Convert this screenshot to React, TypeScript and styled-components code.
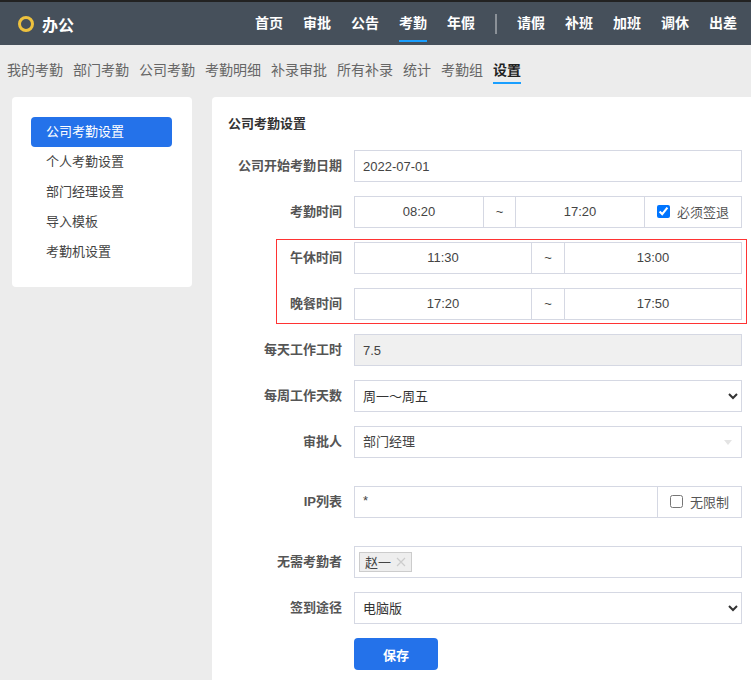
import styled, { createGlobalStyle } from 'styled-components'

const GlobalStyle = createGlobalStyle`
    html, body {
        margin: 0;
        height: 680px;
        overflow: hidden;
        background-color: #ececec;
        font-family: 'Liberation Sans', 'Noto Sans CJK SC', sans-serif;
        font-size: 13px;
        color: #333;
    }
    * {
        box-sizing: border-box;
    }
`

const TopBar = styled.header`
    height: 45px;
    border-top: 2px solid #222;
    background-color: #46505b;
    display: flex;
    align-items: center;
    padding: 0 14px 0 18px;
    color: white;
`
const Logo = styled.div`
    display: flex;
    align-items: center;
    gap: 8px;
    font-size: 16px;
    font-weight: 600;
    flex: 1;
`
const LogoRing = styled.span`
    width: 16px;
    height: 16px;
    border: 3px solid #eec23e;
    border-radius: 50%;
`
const TopNav = styled.nav`
    display: flex;
    align-items: center;
    gap: 20px;
`
const TopLink = styled.a<{ $active?: boolean }>`
    height: 37px;
    padding-top: 7px;
    font-size: 14px;
    font-weight: 700;
    line-height: 22px;
    border-bottom: 2px solid ${p => (p.$active ? '#1a9fff' : 'transparent')};
`
const NavDivider = styled.span`
    width: 2px;
    height: 20px;
    background-color: #8b9198;
`
const SubNav = styled.nav`
    height: 52px;
    display: flex;
    gap: 10px;
    padding: 12px 7px 0;
`
const SubLink = styled.a<{ $active?: boolean }>`
    height: 27px;
    font-size: 14px;
    line-height: 27px;
    color: ${p => (p.$active ? '#222' : '#666')};
    font-weight: ${p => (p.$active ? 700 : 400)};
    border-bottom: 2px solid ${p => (p.$active ? '#1a9fff' : 'transparent')};
`
const Content = styled.div`
    display: flex;
    align-items: flex-start;
    gap: 20px;
    padding-left: 12px;
`
const SideCard = styled.aside`
    width: 180px;
    padding: 20px 20px 20px 19px;
    background-color: white;
    border-radius: 4px;
`
const SideItem = styled.div<{ $active?: boolean }>`
    height: 30px;
    line-height: 29px;
    padding-left: 15px;
    border-radius: 4px;
    color: ${p => (p.$active ? 'white' : '#444')};
    background-color: ${p => (p.$active ? '#2472ea' : 'transparent')};
`
const MainPanel = styled.main`
    width: 539px;
    height: 600px;
    padding: 20px 9px 0 16px;
    background-color: white;
    border-radius: 4px 0 0 0;
    display: flex;
    flex-direction: column;
    gap: 14px;
`
const Title = styled.h2`
    margin: 0 0 5px;
    font-size: 13px;
    line-height: 14px;
    font-weight: 700;
    color: #333;
`
const Row = styled.div<{ $gapBefore?: boolean }>`
    display: flex;
    align-items: center;
    gap: 12px;
    margin-top: ${p => (p.$gapBefore ? '14px' : '0')};
`
const Label = styled.label`
    width: 114px;
    text-align: right;
    font-weight: 700;
    color: #555;
    padding-bottom: 4px;
`
const Field = styled.div<{ $disabled?: boolean }>`
    flex: 1;
    height: 32px;
    display: flex;
    align-items: center;
    border: 1px solid #d5d8e3;
    background-color: ${p => (p.$disabled ? '#f0f0f0' : 'white')};
    position: relative;
`
const PlainValue = styled.span<{ $raised?: boolean }>`
    flex: 1;
    padding-left: 8px;
    padding-bottom: ${p => (p.$raised ? '3px' : '0')};
    color: #444;
`
const Cell = styled.div<{ $width?: number; $divided?: boolean }>`
    flex: ${p => (p.$width ? `0 0 ${p.$width}px` : '1')};
    height: 100%;
    display: flex;
    align-items: center;
    justify-content: center;
    color: #444;
    padding-bottom: 1px;
    border-left: ${p => (p.$divided ? '1px solid #d5d8e3' : 'none')};
`
const CheckLabel = styled.span`
    display: flex;
    align-items: center;
    gap: 7px;
    color: #555;
    input {
        margin: 0;
        width: 13px;
        height: 13px;
    }
`
const Picker = styled.select`
    flex: 1;
    height: 32px;
    border: 1px solid #d5d8e3;
    border-radius: 0;
    background-color: white;
    padding-left: 4px;
    font-family: inherit;
    font-size: 13px;
    color: #333;
`
const Caret = styled.span`
    position: absolute;
    right: 9px;
    top: 13px;
    border-left: 4px solid transparent;
    border-right: 4px solid transparent;
    border-top: 5px solid #e4e4e4;
`
const Tag = styled.span`
    margin-left: 4px;
    height: 20px;
    padding: 0 5px 2px 5px;
    display: inline-flex;
    align-items: center;
    gap: 5px;
    background-color: #eee;
    border: 1px solid #ccc;
    color: #444;
`
const TagClose = styled.svg`
    width: 10px;
    height: 10px;
    margin-top: 2px;
    stroke: #ccc;
    stroke-width: 1.2;
`
const BreakGroup = styled.div`
    display: flex;
    flex-direction: column;
    gap: 14px;
    position: relative;
    &::after {
        content: '';
        position: absolute;
        left: 48px;
        right: -5px;
        top: -3px;
        bottom: -4px;
        border: 1px solid #f33;
        pointer-events: none;
    }
`
const SaveRow = styled.div`
    padding-left: 126px;
`
const SaveButton = styled.button`
    width: 84px;
    height: 32px;
    border: none;
    border-radius: 4px;
    background-color: #2472ea;
    color: white;
    font-family: inherit;
    font-size: 13px;
    font-weight: 700;
`

const topLinks = ['首页', '审批', '公告', '考勤', '年假']
const requestLinks = ['请假', '补班', '加班', '调休', '出差']
const subLinks = ['我的考勤', '部门考勤', '公司考勤', '考勤明细', '补录审批', '所有补录', '统计', '考勤组', '设置']
const sideItems = ['公司考勤设置', '个人考勤设置', '部门经理设置', '导入模板', '考勤机设置']

function TimeRow({ label, from, to }: { label: string; from: string; to: string }) {
    return (
        <Row>
            <Label>{label}</Label>
            <Field>
                <Cell>{from}</Cell>
                <Cell $width={33} $divided>~</Cell>
                <Cell $divided>{to}</Cell>
            </Field>
        </Row>
    )
}

export default function App() {
    return (
        <>
            <GlobalStyle />
            <TopBar>
                <Logo>
                    <LogoRing />
                    办公
                </Logo>
                <TopNav>
                    {topLinks.map(t => (
                        <TopLink key={t} $active={t === '考勤'}>{t}</TopLink>
                    ))}
                    <NavDivider />
                    {requestLinks.map(t => (
                        <TopLink key={t}>{t}</TopLink>
                    ))}
                </TopNav>
            </TopBar>
            <SubNav>
                {subLinks.map(t => (
                    <SubLink key={t} $active={t === '设置'}>{t}</SubLink>
                ))}
            </SubNav>
            <Content>
                <SideCard>
                    {sideItems.map((t, i) => (
                        <SideItem key={t} $active={i === 0}>{t}</SideItem>
                    ))}
                </SideCard>
                <MainPanel>
                    <Title>公司考勤设置</Title>
                    <Row>
                        <Label>公司开始考勤日期</Label>
                        <Field><PlainValue>2022-07-01</PlainValue></Field>
                    </Row>
                    <Row>
                        <Label>考勤时间</Label>
                        <Field>
                            <Cell $width={128}>08:20</Cell>
                            <Cell $width={32} $divided>~</Cell>
                            <Cell $width={129} $divided>17:20</Cell>
                            <Cell $divided>
                                <CheckLabel>
                                    <input type="checkbox" defaultChecked />
                                    必须签退
                                </CheckLabel>
                            </Cell>
                        </Field>
                    </Row>
                    <BreakGroup>
                        <TimeRow label="午休时间" from="11:30" to="13:00" />
                        <TimeRow label="晚餐时间" from="17:20" to="17:50" />
                    </BreakGroup>
                    <Row>
                        <Label>每天工作工时</Label>
                        <Field $disabled><PlainValue>7.5</PlainValue></Field>
                    </Row>
                    <Row>
                        <Label>每周工作天数</Label>
                        <Picker defaultValue="周一～周五">
                            <option>周一～周五</option>
                        </Picker>
                    </Row>
                    <Row>
                        <Label>审批人</Label>
                        <Field>
                            <PlainValue $raised>部门经理</PlainValue>
                            <Caret />
                        </Field>
                    </Row>
                    <Row $gapBefore>
                        <Label>IP列表</Label>
                        <Field>
                            <PlainValue $raised>*</PlainValue>
                            <Cell $width={84} $divided>
                                <CheckLabel>
                                    <input type="checkbox" />
                                    无限制
                                </CheckLabel>
                            </Cell>
                        </Field>
                    </Row>
                    <Row $gapBefore>
                        <Label>无需考勤者</Label>
                        <Field>
                            <Tag>
                                赵一
                                <TagClose viewBox="0 0 10 10">
                                    <path d="M1 1L9 9M9 1L1 9" />
                                </TagClose>
                            </Tag>
                        </Field>
                    </Row>
                    <Row>
                        <Label>签到途径</Label>
                        <Picker defaultValue="电脑版">
                            <option>电脑版</option>
                        </Picker>
                    </Row>
                    <SaveRow>
                        <SaveButton>保存</SaveButton>
                    </SaveRow>
                </MainPanel>
            </Content>
        </>
    )
}
